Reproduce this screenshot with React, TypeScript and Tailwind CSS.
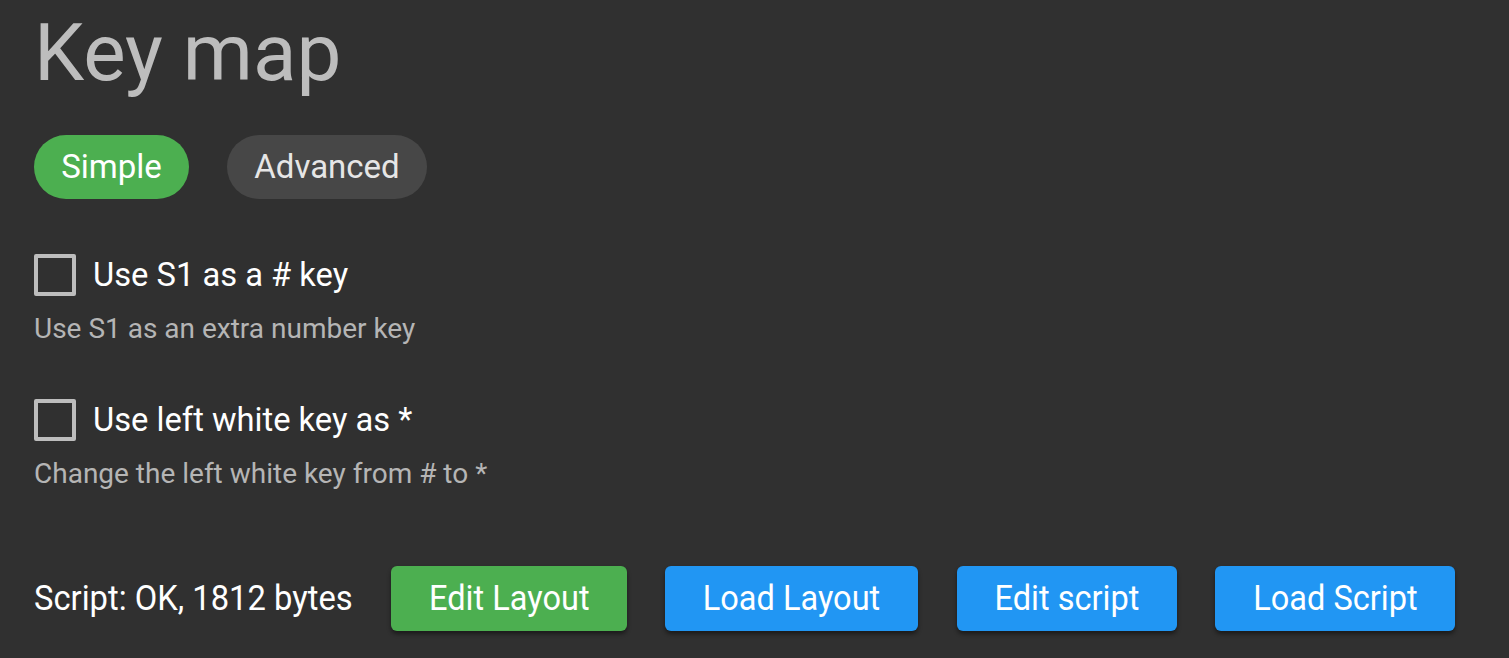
import React from "react";

function Checkbox() {
  return <div className="w-[42px] h-[42px] border-[4px] border-[#bdbdbd] rounded-[2px] shrink-0" />;
}

function ActionButton({ label, width, color }: { label: string; width: string; color: string }) {
  return (
    <button className={`h-[65px] ${width} rounded-[6px] ${color} text-white shadow-[0_3px_4px_rgba(0,0,0,0.45)] flex items-center justify-center`}>
      <span className="inline-block whitespace-nowrap text-[35px] leading-[40px] scale-x-[0.93]">{label}</span>
    </button>
  );
}

export default function App() {
  return (
    <div className="min-h-[658px] w-full bg-[#303030] overflow-hidden" style={{ fontFamily: "Roboto, 'Liberation Sans', sans-serif" }}>
      <div className="pl-[34px] pt-[6px]">
        <h1 className="text-[80px] leading-[94px] text-[#bdbdbd] font-normal">Key map</h1>
        <div className="flex gap-[38px] mt-[35px]">
          <button className="h-[64px] w-[155px] rounded-full bg-[#4caf50] text-white text-[33px] leading-[40px]">Simple</button>
          <button className="h-[64px] w-[200px] rounded-full bg-[#474747] text-[#e6e6e6] text-[33px] leading-[40px]">Advanced</button>
        </div>
        <div className="mt-[55px] h-[42px] flex items-center gap-[17px]">
          <Checkbox />
          <span className="text-white text-[32.7px] leading-[42px]">Use S1 as a # key</span>
        </div>
        <div className="mt-[17px] text-[28px] text-[#b5b5b5] leading-[32px]">Use S1 as an extra number key</div>
        <div className="mt-[54px] h-[42px] flex items-center gap-[17px]">
          <Checkbox />
          <span className="text-white text-[32.7px] leading-[42px]">Use left white key as *</span>
        </div>
        <div className="mt-[17px] text-[28px] text-[#b5b5b5] leading-[32px]">Change the left white key from # to *</div>
        <div className="mt-[76px] flex items-center">
          <div className="w-[319px] mr-[38px] text-white">
            <span className="inline-block whitespace-nowrap text-[35px] leading-[40px] scale-x-[0.935] origin-left">Script: OK, 1812 bytes</span>
          </div>
          <div className="flex items-center gap-[38px]">
            <ActionButton label="Edit Layout" width="w-[236px]" color="bg-[#4caf50]" />
            <ActionButton label="Load Layout" width="w-[253px]" color="bg-[#2196f3]" />
          </div>
          <div className="ml-[39px] flex items-center gap-[38px]">
            <ActionButton label="Edit script" width="w-[220px]" color="bg-[#2196f3]" />
            <ActionButton label="Load Script" width="w-[240px]" color="bg-[#2196f3]" />
          </div>
        </div>
      </div>
    </div>
  );
}
